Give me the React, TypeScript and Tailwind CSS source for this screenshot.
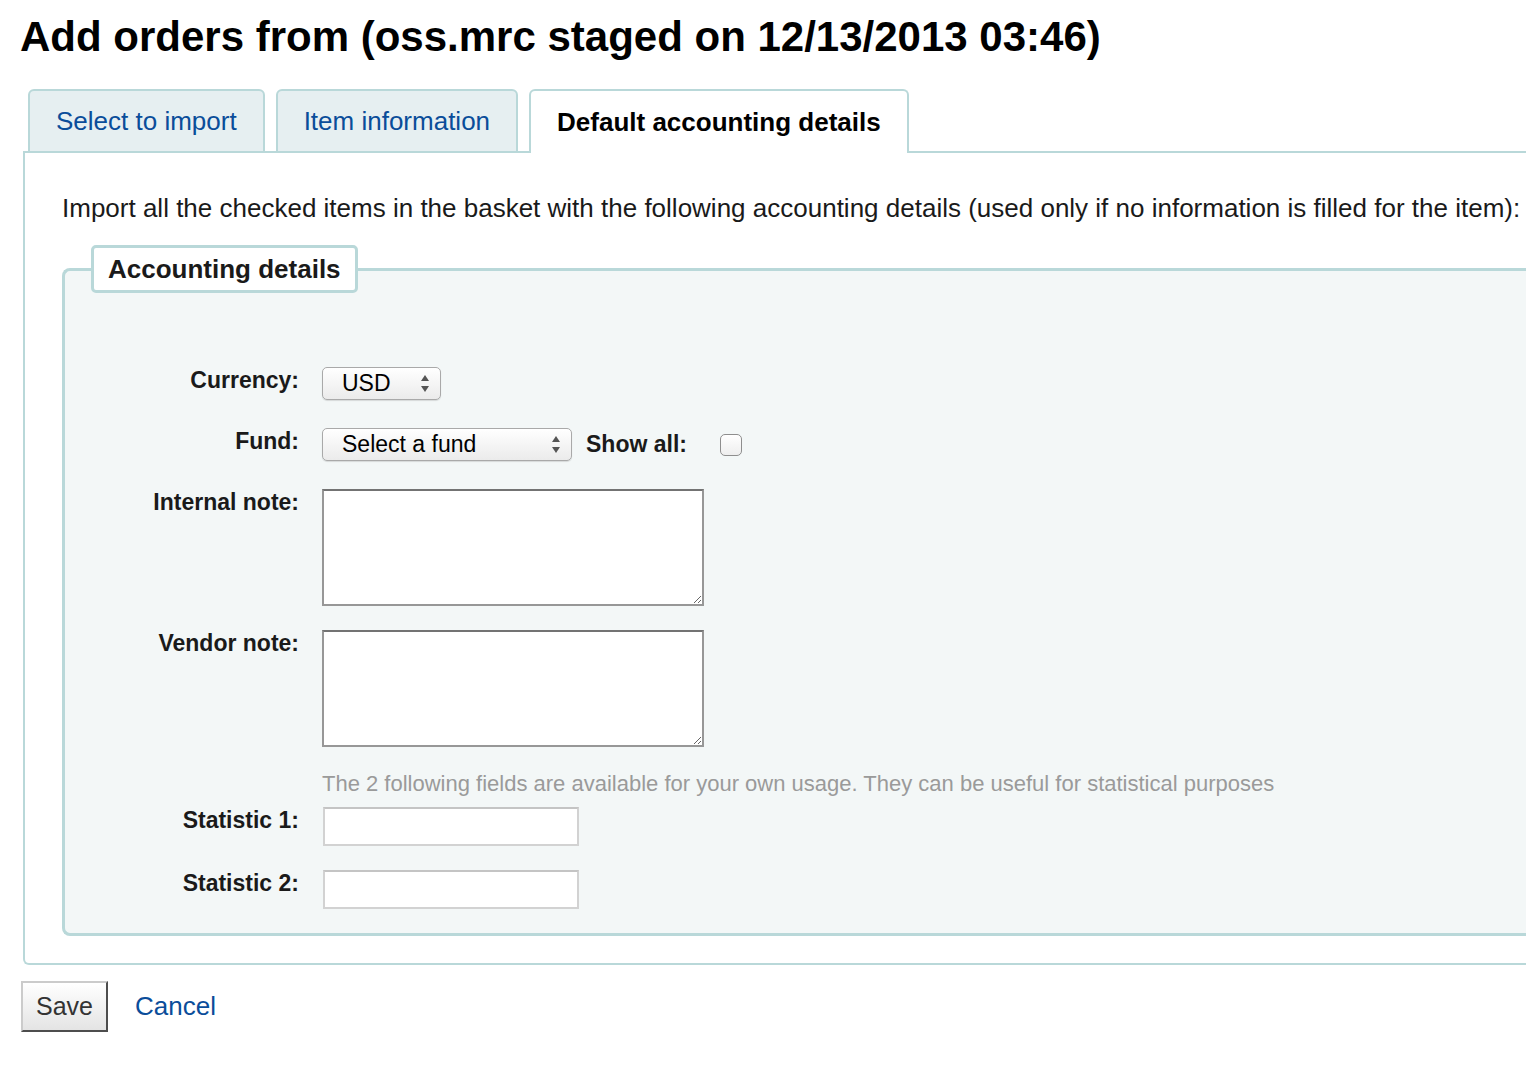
import React from 'react';

const font = { fontFamily: '"Liberation Sans", Arial, sans-serif' };

function UpDown() {
  return (
    <svg width="8" height="17" viewBox="0 0 8 17" className="shrink-0">
      <path d="M4 0 L8 6 L0 6 Z" fill="#555" />
      <path d="M0 11 L8 11 L4 17 Z" fill="#555" />
    </svg>
  );
}

function FakeSelect({ value, width }: { value: string; width: string }) {
  return (
    <div
      className={`${width} h-[33px] flex items-center justify-between pl-[19px] pr-[11px] border border-[#a9a9a9] rounded-[5px] bg-gradient-to-b from-white to-[#ebebeb] shadow-[0_1px_1px_rgba(0,0,0,0.12)] text-[23px] text-black`}
    >
      <span>{value}</span>
      <UpDown />
    </div>
  );
}

function Row({ label, children, className = '' }: { label: string; children: React.ReactNode; className?: string }) {
  return (
    <div className={`flex items-start ${className}`}>
      <label className="w-[234px] mr-[23px] text-right font-bold text-[23px] leading-[26px] text-[#1a1a1a] shrink-0">
        {label}
      </label>
      {children}
    </div>
  );
}

export default function App() {
  const tabs = ['Select to import', 'Item information', 'Default accounting details'];
  const active = 2;

  return (
    <div className="min-h-screen w-full overflow-x-hidden bg-white pl-[21px]" style={font}>
      <h1 className="mt-[13px] text-[42px] leading-[48px] font-bold text-black -ml-[1px] whitespace-nowrap">
        Add orders from (oss.mrc staged on 12/13/2013 03:46)
      </h1>

      {/* Tabs */}
      <div className="mt-[28px] ml-[7px] flex items-end gap-[11px] relative z-10 -mb-[2px]">
        {tabs.map((t, i) =>
          i === active ? (
            <div
              key={t}
              className="h-[64px] px-[26px] flex items-center border-2 border-b-0 border-[#b9d8d9] rounded-t-[6px] bg-white text-[26px] font-bold text-black"
            >
              {t}
            </div>
          ) : (
            <div
              key={t}
              className="h-[64px] px-[26px] flex items-center border-2 border-[#b9d8d9] rounded-t-[6px] bg-[#e6eff1] text-[26px] text-[#0a4d9a]"
            >
              {t}
            </div>
          )
        )}
      </div>

      {/* Tab panel */}
      <div className="ml-[2px] w-[1530px] border-2 border-r-0 border-[#b9d8d9] rounded-bl-[6px] pl-[37px] pt-[40px] pb-[27px]">
        <p className="text-[26px] leading-[30px] text-[#1a1a1a] whitespace-nowrap">
          Import all the checked items in the basket with the following accounting details (used only if no information is filled for the item):
        </p>

        <fieldset className="mt-[22px] border-[3px] border-r-0 border-[#b9d8d9] rounded-l-[8px] bg-[#f3f7f7] pt-[74px] pb-[24px] px-0 m-0">
          <legend className="ml-[26px] px-[14px] py-[6px] bg-white border-[3px] border-[#b9d8d9] rounded-[5px] text-[26px] leading-[30px] font-bold text-[#1a1a1a]">
            Accounting details
          </legend>

          <Row label="Currency:">
            <FakeSelect value="USD" width="w-[119px]" />
          </Row>

          <Row label="Fund:" className="mt-[28px]">
            <FakeSelect value="Select a fund" width="w-[250px]" />
            <span className="ml-[14px] font-bold text-[23px] leading-[33px] text-[#1a1a1a]">Show all:</span>
            <input
              type="checkbox"
              className="ml-[33px] mt-[6px] appearance-none w-[22px] h-[22px] rounded-[5px] border border-[#8e8e8e] bg-gradient-to-b from-white to-[#eeeeee]"
            />
          </Row>

          <Row label="Internal note:" className="mt-[28px]">
            <textarea className="w-[382px] h-[117px] border-2 border-[#979797] border-t-[#737373] bg-white resize outline-none" />
          </Row>

          <Row label="Vendor note:" className="mt-[24px]">
            <textarea className="w-[382px] h-[117px] border-2 border-[#979797] border-t-[#737373] bg-white resize outline-none" />
          </Row>

          <div className="mt-[24px] pl-[257px] text-[22px] leading-[25px] text-[#9a9a9a] whitespace-nowrap">
            The 2 following fields are available for your own usage. They can be useful for statistical purposes
          </div>

          <Row label="Statistic 1:" className="mt-[11px]">
            <input type="text" className="ml-[1px] w-[256px] h-[39px] border-2 border-[#d2d2d2] border-t-[#c4c4c4] bg-white outline-none" />
          </Row>

          <Row label="Statistic 2:" className="mt-[24px]">
            <input type="text" className="ml-[1px] w-[256px] h-[39px] border-2 border-[#d2d2d2] border-t-[#c4c4c4] bg-white outline-none" />
          </Row>
        </fieldset>
      </div>

      {/* Actions */}
      <div className="mt-[16px] flex items-center">
        <button
          type="button"
          className="w-[87px] h-[51px] border-2 border-t-[#cbcbcb] border-l-[#cbcbcb] border-r-[#4d4d4d] border-b-[#4d4d4d] bg-gradient-to-b from-white to-[#e4e4e4] text-[25px] text-[#333]"
        >
          Save
        </button>
        <a href="#" className="ml-[27px] text-[26px] text-[#0a4d9a]">
          Cancel
        </a>
      </div>
    </div>
  );
}
